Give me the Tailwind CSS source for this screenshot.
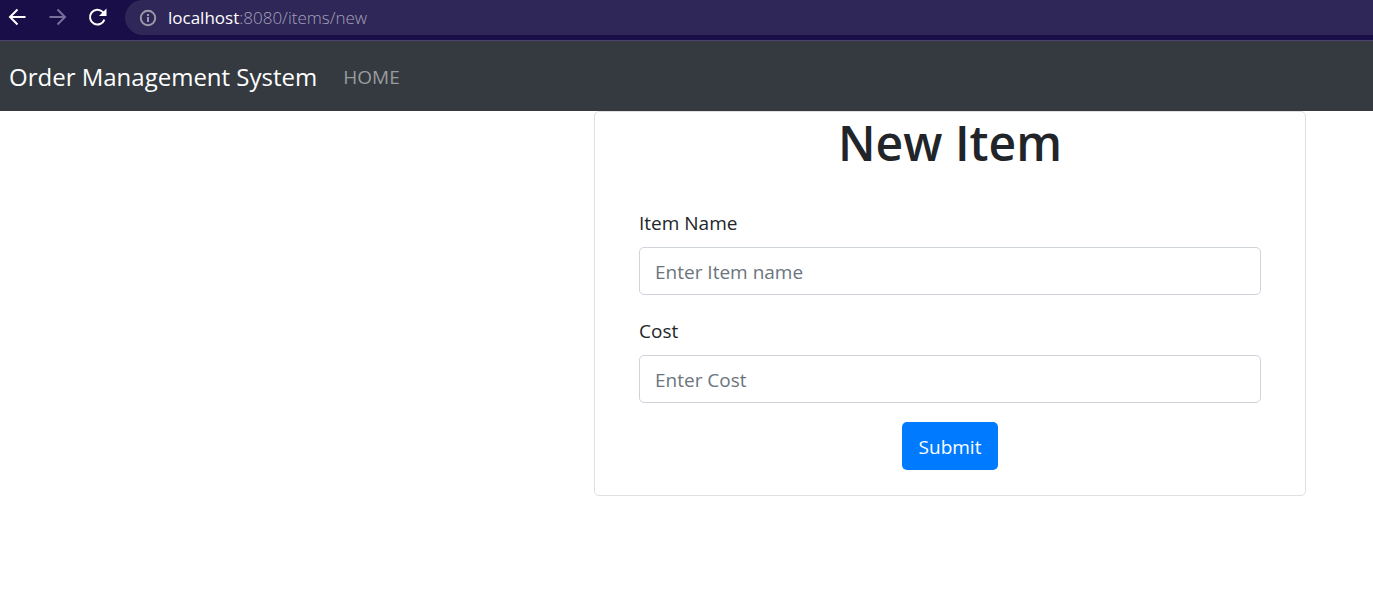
<!DOCTYPE html>
<html lang="en">
<head>
<meta charset="utf-8">
<meta name="viewport" content="width=device-width, initial-scale=1">
<title>New Item</title>
<script src="https://cdn.jsdelivr.net/npm/@tailwindcss/browser@4"></script>
</head>
<body class="min-h-screen bg-white font-['Open_Sans','Noto_Sans',sans-serif] text-[19px] leading-[30px] text-[#212529]">
<header class="flex h-[41px] items-start border-b border-[#4a4272] bg-[#190e47]">
  <div class="flex h-[35px] shrink-0 items-center gap-5 pb-px pl-[7px] pr-[18px]">
    <button type="button" aria-label="Back" class="size-5 text-white">
      <svg viewBox="0 0 20 20" class="size-5" fill="none" stroke="currentColor" stroke-width="2"><path d="M18.500 10H3.500M10.500 2.500L3 10l7.500 7.500"/></svg>
    </button>
    <button type="button" aria-label="Forward" class="size-5 text-[#77709a]">
      <svg viewBox="0 0 20 20" class="size-5" fill="none" stroke="currentColor" stroke-width="2"><path d="M2.500 10h15M10.500 2.500L18 10l-7.500 7.500"/></svg>
    </button>
    <button type="button" aria-label="Reload" class="size-5 text-white">
      <svg viewBox="0 0 20 20" class="size-5" fill="none" stroke="currentColor" stroke-width="2"><path d="M17.400 12.600A7.400 7.400 0 1 1 15.700 4.900L17 6.200"/><path d="M19.500 1.500v7.500H12z" fill="currentColor" stroke="none"/></svg>
    </button>
  </div>
  <div class="flex h-[35px] flex-1 items-center gap-[11px] rounded-l-full bg-[#2f2757] pl-[14px] text-[17px] leading-6">
    <svg viewBox="0 0 18 18" class="size-[18px] shrink-0" fill="none" stroke="#9b99a8" stroke-width="2"><circle cx="9" cy="9" r="7.200"/><path d="M9 8v5M9 5v2"/></svg>
    <p class="font-light text-[#a5a1bb]"><span class="font-normal text-white">localhost</span>:8080/items/new</p>
  </div>
</header>
<nav class="flex h-[70px] items-center gap-[26px] bg-[#343a40] px-[9px] pt-[2px]">
  <a href="#" class="text-[24px] text-white">Order Management System</a>
  <a href="#" class="text-[#999c9f]">HOME</a>
</nav>
<main class="lg:ml-[594px] lg:mr-[67px]">
  <form class="flex flex-col rounded-[5px] border border-[#dfdfdf] px-11 pb-[25px]">
    <h1 class="pt-px text-center text-[48px] font-semibold leading-[60px]">New Item</h1>
    <label for="name" class="mt-[35px]">Item Name</label>
    <input id="name" type="text" placeholder="Enter Item name" class="mt-[9px] h-12 w-full rounded-[5px] border border-[#ced4da] px-[15px] pt-[2px] placeholder:text-[#6c757d]">
    <label for="cost" class="mt-[21px]">Cost</label>
    <input id="cost" type="text" placeholder="Enter Cost" class="mt-[9px] h-12 w-full rounded-[5px] border border-[#ced4da] px-[15px] pt-[2px] placeholder:text-[#6c757d]">
    <button type="submit" class="mt-[19px] h-12 self-center rounded-[5px] bg-[#007bff] px-[17px] pt-[2px] text-white">Submit</button>
  </form>
</main>
</body>
</html>
